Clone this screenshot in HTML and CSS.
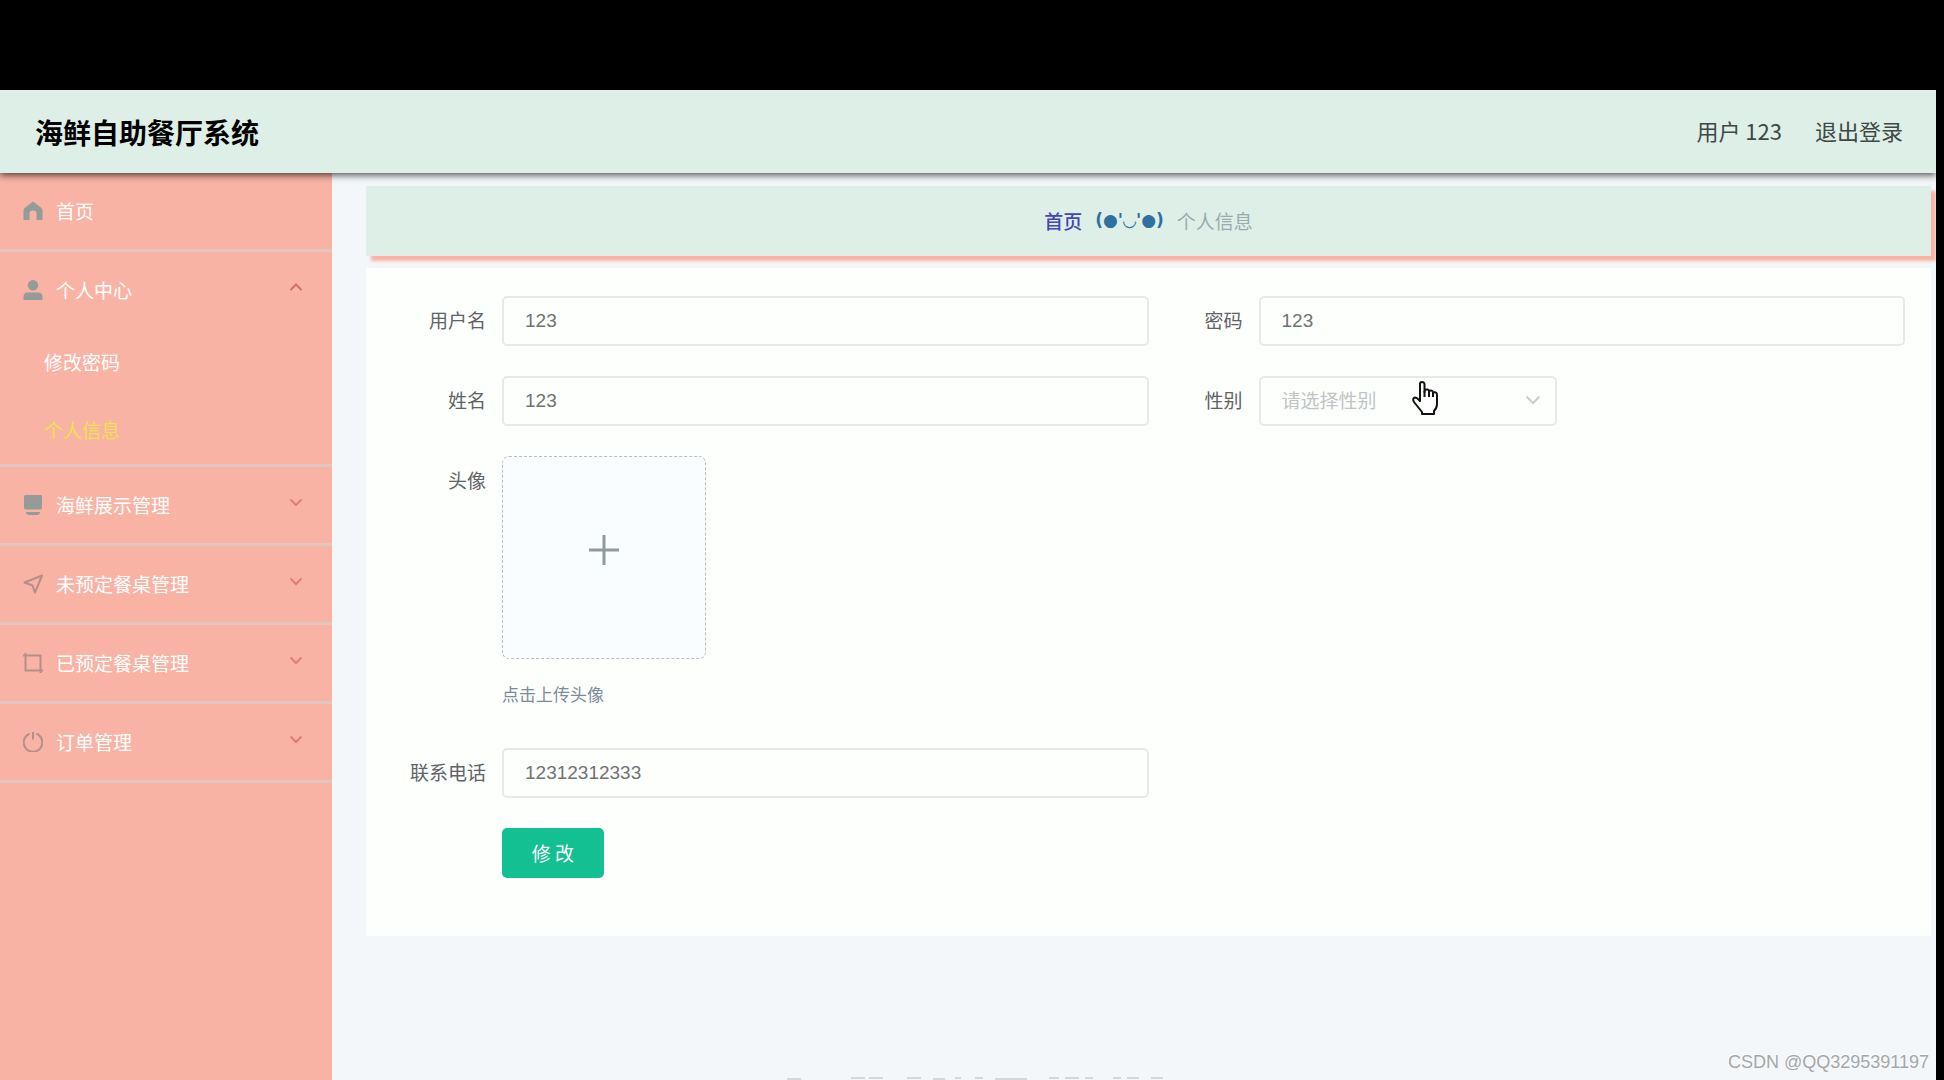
FILE: index.html
```html
<!DOCTYPE html>
<html lang="zh-CN">
<head>
<meta charset="utf-8">
<title>海鲜自助餐厅系统</title>
<link rel="stylesheet" href="styles.css">
</head>
<body>
<div class="app">
  <header class="header">
    <h1 class="header-title">海鲜自助餐厅系统</h1>
    <div class="header-user">
      <span>用户 123</span>
      <a class="header-link" href="#">退出登录</a>
    </div>
  </header>
  <div class="body">
    <nav class="sidebar">
      <ul class="menu">
        <li class="menu-group">
          <a class="menu-title" href="#">
            <svg class="menu-icon" viewBox="0 0 20 20"><path fill="currentColor" d="M10 0.5 1.5 7Q0.5 8 0.5 9.5V19H6.5V12.5Q6.5 9.5 10 9.5T13.500 12.500V19H19.500V9.500Q19.500 8 18.500 7Z"/></svg>
            <span class="menu-text">首页</span>
          </a>
        </li>
        <li class="menu-group">
          <a class="menu-title" href="#">
            <svg class="menu-icon" viewBox="0 0 20 20"><circle cx="10" cy="5.200" r="5.200" fill="currentColor"/><path fill="currentColor" d="M0.500 20V17Q0.500 12.500 5 12.500H15Q19.500 12.500 19.500 17V20Z"/></svg>
            <span class="menu-text">个人中心</span>
            <svg class="menu-arrow menu-arrow-open" viewBox="0 0 14 14"><path d="M1.500 10 7 4.500 12.500 10"/></svg>
          </a>
          <ul class="submenu">
            <li><a class="submenu-link" href="#">修改密码</a></li>
            <li><a class="submenu-link submenu-link-active" href="#">个人信息</a></li>
          </ul>
        </li>
        <li class="menu-group">
          <a class="menu-title" href="#">
            <svg class="menu-icon" viewBox="0 0 20 20"><path fill="currentColor" d="M2.500 0H17.500Q19 0 19 1.500V12.500Q19 14.500 17 14.500H3Q1 14.500 1 12.500V1.500Q1 0 2.500 0ZM3 17H17V18Q16 20 14 20H6Q4 20 3 18Z"/></svg>
            <span class="menu-text">海鲜展示管理</span>
            <svg class="menu-arrow" viewBox="0 0 14 14"><path d="M1.500 4.500 7 10 12.500 4.500"/></svg>
          </a>
        </li>
        <li class="menu-group">
          <a class="menu-title" href="#">
            <svg class="menu-icon menu-icon-line" viewBox="0 0 20 20"><path d="M19 1.500 1.500 8.500 9.500 11.500 12 18.500Z"/></svg>
            <span class="menu-text">未预定餐桌管理</span>
            <svg class="menu-arrow" viewBox="0 0 14 14"><path d="M1.500 4.500 7 10 12.500 4.500"/></svg>
          </a>
        </li>
        <li class="menu-group">
          <a class="menu-title" href="#">
            <svg class="menu-icon menu-icon-line" viewBox="0 0 20 20"><path d="M0 2.500H17.500V20M2.500 0V17.500H20"/></svg>
            <span class="menu-text">已预定餐桌管理</span>
            <svg class="menu-arrow" viewBox="0 0 14 14"><path d="M1.500 4.500 7 10 12.500 4.500"/></svg>
          </a>
        </li>
        <li class="menu-group">
          <a class="menu-title" href="#">
            <svg class="menu-icon menu-icon-line" viewBox="0 0 20 20"><path d="M6.500 1.800A9.300 9.300 0 1 0 13.500 1.800M10 0V7.500"/></svg>
            <span class="menu-text">订单管理</span>
            <svg class="menu-arrow" viewBox="0 0 14 14"><path d="M1.500 4.500 7 10 12.500 4.500"/></svg>
          </a>
        </li>
      </ul>
    </nav>
    <main class="main">
      <nav class="breadcrumb">
        <a class="breadcrumb-home" href="#">首页</a>
        <span class="breadcrumb-face">(●'◡'●)</span>
        <span class="breadcrumb-current">个人信息</span>
      </nav>
      <form class="card">
        <div class="field">
          <label class="field-label" for="username">用户名</label>
          <input class="field-input" id="username" type="text" value="123">
        </div>
        <div class="field">
          <label class="field-label" for="password">密码</label>
          <input class="field-input" id="password" type="text" value="123">
        </div>
        <div class="field">
          <label class="field-label" for="realname">姓名</label>
          <input class="field-input" id="realname" type="text" value="123">
        </div>
        <div class="field">
          <label class="field-label" for="gender">性别</label>
          <div class="select-box">
            <select class="field-input field-select" id="gender">
              <option>请选择性别</option>
            </select>
            <svg class="select-arrow" viewBox="0 0 16 16"><path d="M1.500 4.500 8 11 14.500 4.500"/></svg>
            <svg class="pointer" viewBox="0 0 26 34"><path fill="#fff" stroke="#111" stroke-width="2" stroke-linejoin="round" d="M8 20V3Q8 1 10 1T12.500 3V11V9Q16.500 7.500 17 10Q20.500 8.500 21 11.500Q25 10.500 25 14V23Q25 27 22 30V33H10V31L2 21Q0 17 3 16.500Q5 16.500 8 20Z"/><path fill="none" stroke="#111" stroke-width="2" d="M12.500 10V16M17 10V16M21 11.500V16"/></svg>
          </div>
        </div>
        <div class="field field-wide">
          <label class="field-label" for="avatar">头像</label>
          <div class="upload">
            <button class="upload-box" id="avatar" type="button" aria-label="上传头像">
              <svg class="upload-plus" viewBox="0 0 32 32"><path d="M16 1V31M1 16H31"/></svg>
            </button>
            <p class="upload-tip">点击上传头像</p>
          </div>
        </div>
        <div class="field">
          <label class="field-label" for="phone">联系电话</label>
          <input class="field-input" id="phone" type="text" value="12312312333">
        </div>
        <div class="field field-wide field-actions">
          <button class="submit" type="button">修 改</button>
        </div>
      </form>
      <footer class="footer">
        <svg class="footer-marks" viewBox="0 0 380 3"><path d="M2 2H16M66 1H80M84 1H98M122 1H136M148 2H160M170 1H176M190 1H198M210 2H242M264 1H274M280 1H294M300 1H308M328 1H336M342 1H354M366 1H378"/></svg>
      </footer>
    </main>
  </div>
  <div class="watermark">CSDN @QQ3295391197</div>
</div>
</body>
</html>
```

FILE: styles.css
```css
* {
  box-sizing: border-box;
}

body {
  margin: 0;
  padding: 90px 8px 0 0;
  min-height: 100vh;
  display: flex;
  background: #000;
  font-family: "Noto Sans CJK SC", sans-serif;
  font-size: 19px;
  color: #606266;
}

a {
  color: inherit;
  text-decoration: none;
}

ul {
  margin: 0;
  padding: 0;
  list-style: none;
}

.app {
  position: relative;
  flex: 1;
  display: flex;
  flex-direction: column;
  overflow: hidden;
  background: #f3f7f9;
}

.header {
  position: relative;
  z-index: 1;
  display: flex;
  align-items: center;
  justify-content: space-between;
  height: 83px;
  padding: 0 33px 0 35px;
  background: #deefe7;
  box-shadow: 0 2px 7px rgba(0, 0, 0, 0.7);
}

.header-title {
  margin: 0;
  font-size: 28px;
  font-weight: 700;
  color: #000;
}

.header-user {
  display: flex;
  gap: 33px;
  padding-bottom: 3px;
  font-size: 22px;
  color: #404846;
}

.body {
  flex: 1;
  display: flex;
}

.sidebar {
  flex: none;
  width: 332px;
  background: #f8b3a5;
  color: #fff;
}

.menu-group {
  border-bottom: 3px solid #e2c5be;
}

.menu-title {
  display: flex;
  align-items: center;
  gap: 13px;
  height: 76px;
  padding: 0 29px 0 23px;
}

.menu-icon {
  flex: none;
  width: 20px;
  height: 20px;
  color: #949b98;
}

.menu-icon-line {
  fill: none;
  stroke: #b38f88;
  stroke-width: 2;
  stroke-linejoin: round;
}

.menu-text {
  flex: 1;
  padding-bottom: 2px;
}

.menu-arrow {
  flex: none;
  width: 14px;
  height: 14px;
  margin-bottom: 6px;
  fill: none;
  stroke: #e27d74;
  stroke-width: 2;
}

.menu-arrow-open {
  stroke: #d0736b;
}

.submenu-link {
  display: block;
  padding-left: 44px;
  line-height: 68px;
}

.submenu-link-active {
  color: #f1e04f;
}

.main {
  flex: 1;
  display: flex;
  flex-direction: column;
  gap: 12px;
  padding: 13px 5px 0 34px;
}

.breadcrumb {
  display: flex;
  align-items: center;
  justify-content: center;
  gap: 13px;
  height: 70px;
  padding-bottom: 2px;
  background: #deefe7;
  box-shadow: 5px 5px 3px #f8b3a5;
}

.breadcrumb-home {
  font-weight: 500;
  color: #4544b8;
}

.breadcrumb-face {
  font-family: "DejaVu Sans", sans-serif;
  font-size: 17px;
  font-weight: 700;
  color: #2f70a0;
}

.breadcrumb-current {
  color: #9aabb0;
}

.card {
  display: grid;
  grid-template-columns: 1fr 1fr;
  row-gap: 30px;
  padding: 28px 26px 58px;
  background: #fdfffd;
}

.field {
  display: flex;
  align-items: flex-start;
}

.field-wide {
  grid-column: 1 / -1;
}

.field-label {
  flex: none;
  width: 110px;
  padding-right: 16px;
  line-height: 48px;
  text-align: right;
}

.field-input {
  flex: 1;
  min-width: 0;
  height: 50px;
  padding: 0 21px;
  border: 2px solid #e6e9e7;
  border-radius: 5px;
  background: #fdfffd;
  font-family: "Liberation Sans", "Noto Sans CJK SC", sans-serif;
  font-size: 19px;
  color: #707274;
}

.select-box {
  position: relative;
  display: flex;
  width: 298px;
}

.field-select {
  appearance: none;
  color: #c0c4c4;
}

.select-arrow {
  position: absolute;
  top: 16px;
  right: 16px;
  width: 16px;
  height: 16px;
  fill: none;
  stroke: #c8cccb;
  stroke-width: 2;
}

.pointer {
  position: absolute;
  top: 5px;
  left: 153px;
  width: 26px;
  height: 34px;
}

.upload-box {
  display: flex;
  align-items: center;
  justify-content: center;
  width: 204px;
  height: 203px;
  padding: 0 0 16px;
  border: 1px dashed #b9c0bf;
  border-radius: 7px;
  background: #fafdff;
}

.upload-plus {
  width: 32px;
  height: 32px;
  fill: none;
  stroke: #8f9a9f;
  stroke-width: 3;
}

.upload-tip {
  margin: 11px 0 0;
  font-size: 17px;
  line-height: 48px;
  color: #7d8b97;
}

.field-actions {
  padding-left: 110px;
}

.submit {
  width: 102px;
  height: 50px;
  padding: 0 0 2px;
  border: 0;
  border-radius: 5px;
  background: #12c091;
  font-family: inherit;
  font-size: 19px;
  color: #fff;
}

.footer {
  display: flex;
  justify-content: center;
  margin-top: auto;
  padding-right: 348px;
}

.footer-marks {
  width: 380px;
  height: 3px;
  fill: none;
  stroke: #d4d8d9;
  stroke-width: 2;
}

.watermark {
  position: absolute;
  right: 7px;
  bottom: 6px;
  font-family: "Liberation Sans", sans-serif;
  font-size: 18px;
  line-height: 24px;
  color: #a4a7a9;
  text-shadow: -1px -1px 0 #fff;
}
```
